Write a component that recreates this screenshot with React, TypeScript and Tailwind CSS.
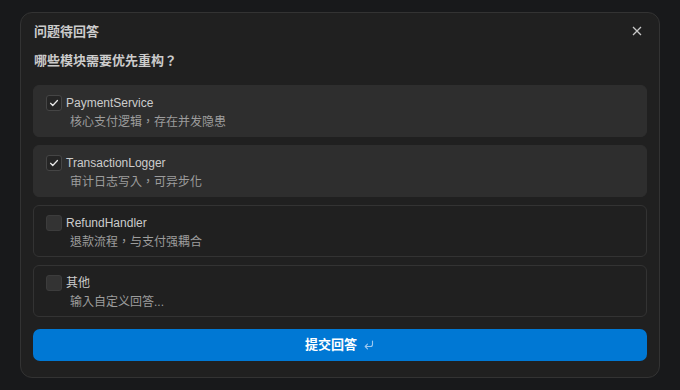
import React, { useState } from "react";

const options = [
  { label: "PaymentService", desc: "核心支付逻辑，存在并发隐患" },
  { label: "TransactionLogger", desc: "审计日志写入，可异步化" },
  { label: "RefundHandler", desc: "退款流程，与支付强耦合" },
  { label: "其他", desc: "输入自定义回答..." },
];

function Check() {
  return (
    <svg width="10" height="10" viewBox="0 0 16 16" fill="none">
      <path d="M2.5 8.5l3.5 3.5 7.5-8" stroke="#e6e6e6" strokeWidth="2" strokeLinecap="round" strokeLinejoin="round" />
    </svg>
  );
}

export default function App() {
  const [sel] = useState<boolean[]>([true, true, false, false]);
  return (
    <div
      className="w-[680px] h-[390px] bg-[#18191b] pt-[12px] pl-[20px]"
      style={{ fontFamily: '"Liberation Sans", "Noto Sans CJK TC", sans-serif' }}
    >
      <div className="w-[640px] h-[366px] rounded-[12px] border border-[#333333] bg-[#202020] px-[12px] pt-[8px] flex flex-col">
        <div className="flex items-center justify-between h-[20px] mt-[1px]">
          <div className="text-[13px] font-bold text-[#cccccc] pl-px">问题待回答</div>
          <svg width="10" height="10" viewBox="0 0 10 10" className="mr-[5px] -mt-[2px]">
            <path d="M1 1l8 8M9 1l-8 8" stroke="#c8c8c8" strokeWidth="1.3" />
          </svg>
        </div>
        <div className="text-[13px] font-bold text-[#cccccc] mt-[9px] h-[20px] leading-[20px] pl-px">
          哪些模块需要优先重构？
        </div>
        <div className="flex flex-col gap-[8px] mt-[14px]">
          {options.map((o, i) => (
            <div
              key={i}
              className={
                "h-[52px] rounded-[6px] border pl-[12px] pt-[9px] " +
                (sel[i] ? "bg-[#2e2e2e] border-[#2e2e2e]" : "bg-[#202020] border-[#333333]")
              }
            >
              <div className="flex items-center h-[16px]">
                <div
                  className={
                    "w-[16px] h-[16px] rounded-[3px] border flex items-center justify-center " +
                    (sel[i] ? "bg-[#252525] border-[#454545]" : "bg-[#333333] border-[#3c3c3c]")
                  }
                >
                  {sel[i] && <Check />}
                </div>
                <span className="ml-[4px] text-[12px] text-[#cccccc]">{o.label}</span>
              </div>
              <div className="ml-[24px] mt-[2px] text-[12px] leading-[18px] text-[#9d9d9d]">{o.desc}</div>
            </div>
          ))}
        </div>
        <button className="mt-[12px] h-[32px] rounded-[7px] bg-[#0078d4] flex items-center justify-center gap-[6px]">
          <span className="text-[13px] font-bold text-white">提交回答</span>
          <svg width="12" height="12" viewBox="0 0 12 12" fill="none">
            <path d="M9.5 2v3.5a2 2 0 0 1-2 2H2.5M4.5 5.2L2.2 7.5l2.3 2.3" stroke="#9cc8ef" strokeWidth="1.1" strokeLinecap="round" strokeLinejoin="round" />
          </svg>
        </button>
      </div>
    </div>
  );
}
